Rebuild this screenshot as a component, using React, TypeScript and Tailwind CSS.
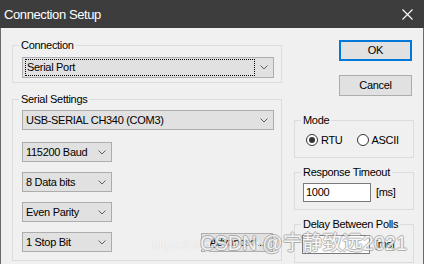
import React from 'react';

const font = "font-['Liberation_Sans',Arial,sans-serif]";

function Chevron() {
  return (
    <svg width="8" height="5" viewBox="0 0 8 5" className="shrink-0">
      <polyline points="0.5,0.5 4,4 7.5,0.5" fill="none" stroke="#606060" strokeWidth="1" />
    </svg>
  );
}

// groupbox: the padding sits on an inner div so the legend keeps its own offset
function Group({ label, className, inner, children }: { label: string; className: string; inner: string; children: React.ReactNode }) {
  return (
    <fieldset className={`border border-[#dcdcdc] ${className}`}>
      <legend className="ml-[6px] px-[2px] leading-[14px]">{label}</legend>
      <div className={inner}>{children}</div>
    </fieldset>
  );
}

function Combo({ value, className, focused }: { value: string; className: string; focused?: boolean }) {
  return (
    <div className={`flex items-center justify-between border border-[#adadad] bg-[#e1e1e1] pr-[5px] ${className}`}>
      {focused ? (
        <div className="ml-[2px] flex h-[17px] w-[230px] items-center border border-dotted border-black pl-[1px]">
          {value}
        </div>
      ) : (
        <span className="pl-[3px]">{value}</span>
      )}
      <Chevron />
    </div>
  );
}

function Radio({ label, checked }: { label: string; checked?: boolean }) {
  return (
    <div className="flex items-center gap-[3px]">
      <div className="flex h-[12px] w-[12px] items-center justify-center rounded-full border border-[#333] bg-white">
        {checked && <div className="h-[6px] w-[6px] rounded-full bg-[#333]" />}
      </div>
      <span>{label}</span>
    </div>
  );
}

function MsInput({ value }: { value: string }) {
  return (
    <div className="flex items-center gap-[5px]">
      <div className="flex h-[19px] w-[68px] items-center border border-[#7a7a7a] bg-white pl-[2px]">{value}</div>
      <span>[ms]</span>
    </div>
  );
}

export default function App() {
  return (
    <div className={`relative h-[264px] w-[424px] overflow-hidden text-[11px] tracking-[-0.3px] text-black ${font}`}>
      {/* title bar */}
      <div className="flex h-[28px] items-center justify-between bg-[#3d3d3d] pl-[4px] pr-[11px]">
        <span className="pt-[1px] text-[13px] tracking-[-0.4px] text-white">Connection Setup</span>
        <svg width="11" height="11" viewBox="0 0 11 11">
          <path d="M0.5 0.5 L10.5 10.5 M10.5 0.5 L0.5 10.5" stroke="#ffffff" strokeWidth="1.1" />
        </svg>
      </div>

      {/* body */}
      <div className="flex h-[236px] border-x border-[#6b6b6b] bg-[#f0f0f0] pl-[11px] pt-[10px]">
        <div className="flex w-[270px] flex-col">
          <Group label="Connection" className="pb-[4px]" inner="pl-[9px] pr-[7px] pt-[5px]">
            <Combo value="Serial Port" focused className="h-[21px] w-full" />
          </Group>
          <Group label="Serial Settings" className="mt-[9px] pb-[8px]" inner="pl-[9px] pr-[7px] pt-[4px]">
            <Combo value="USB-SERIAL CH340 (COM3)" className="h-[20px] w-full" />
            <Combo value="115200 Baud" className="mt-[12px] h-[20px] w-[90px]" />
            <Combo value="8 Data bits" className="mt-[10px] h-[20px] w-[90px]" />
            <Combo value="Even Parity" className="mt-[10px] h-[20px] w-[90px]" />
            <div className="mt-[10px] flex items-center justify-between">
              <Combo value="1 Stop Bit" className="h-[20px] w-[90px]" />
              <button className="mr-[1px] h-[19px] w-[72px] border border-[#adadad] bg-[#e1e1e1]">
                <span className="underline">A</span>dvanced...
              </button>
            </div>
          </Group>
        </div>

        <div className="ml-[12px] flex w-[120px] flex-col pt-[2px]">
          <button className="ml-auto mr-[2px] h-[21px] w-[73px] border-2 border-[#0078d7] bg-[#e1e1e1]">OK</button>
          <button className="ml-auto mr-[2px] mt-[14px] h-[21px] w-[73px] border border-[#adadad] bg-[#e1e1e1]">
            Cancel
          </button>
          <Group label="Mode" className="mt-[17px] pb-[10px]" inner="pl-[11px] pt-[6px]">
            <div className="flex h-[14px] items-center gap-[14px]">
              <Radio label="RTU" checked />
              <Radio label="ASCII" />
            </div>
          </Group>
          <Group label="Response Timeout" className="mt-[7px] pb-[7px]" inner="pl-[8px] pt-[4px]">
            <MsInput value="1000" />
          </Group>
          <Group label="Delay Between Polls" className="mt-[7px] pb-[8px]" inner="pl-[7px] pt-[4px]">
            <MsInput value="" />
          </Group>
        </div>
      </div>

      {/* watermark */}
      <span className="pointer-events-none absolute left-[152px] top-[236px] whitespace-nowrap text-[12px] tracking-normal text-white/80 [text-shadow:0_0_1px_#c8c8c8]">
        https://blog.csdn.net
      </span>
      <span className="pointer-events-none absolute left-[200px] top-[231px] whitespace-nowrap font-['Liberation_Sans','Noto_Sans_CJK_SC',sans-serif] text-[20px] leading-[24px] tracking-normal text-white/90 opacity-80 [text-shadow:1px_0_#a0a0a0,-1px_0_#a0a0a0,0_1px_#a0a0a0,0_-1px_#a0a0a0]">
        CSDN @宁静致远2021
      </span>
    </div>
  );
}
